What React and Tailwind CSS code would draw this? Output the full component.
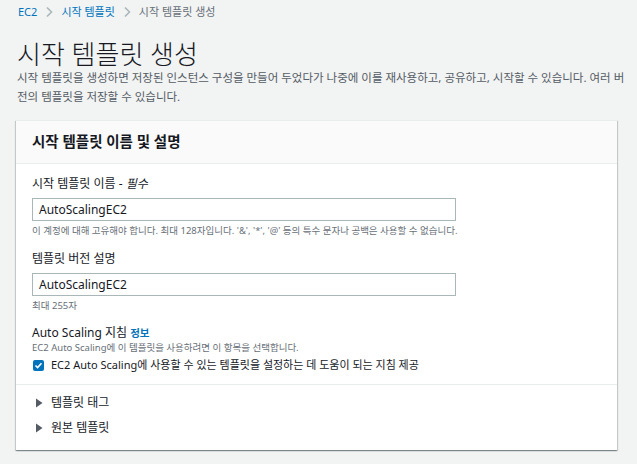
import React from 'react';

const FONT = { fontFamily: '"Noto Sans", "Noto Sans CJK KR", sans-serif' };

function Chevron() {
    return (
        <svg width="10" height="12" viewBox="0 0 10 12" className="mx-[7px]">
            <path d="M3 1.5 L7.5 6 L3 10.5" fill="none" stroke="#aab7b8" strokeWidth="1.6" />
        </svg>
    );
}

function Caret() {
    return (
        <svg width="8" height="10" viewBox="0 0 8 10" className="mr-[8px]">
            <path d="M1 0.5 L7.5 5 L1 9.5 Z" fill="#545b64" />
        </svg>
    );
}

function Field({ label, value, hint }) {
    return (
        <div className="flex flex-col">
            <label className="text-[12px] leading-[16px] text-[#16191f]">{label}</label>
            <div className="mt-[6px] w-[424px] h-[23px] border border-[#aab7b8] bg-white flex items-center px-[6px] text-[12px] text-[#16191f]">
                {value}
            </div>
            <p className="mt-[3px] text-[9.5px] leading-[14px] text-[#687078]">{hint}</p>
        </div>
    );
}

export default function App() {
    return (
        <div style={FONT} className="w-[637px] h-[464px] bg-[#f2f3f3] overflow-hidden">
            <nav className="flex items-center pl-[18px] pt-[4px] h-[20px] text-[11px] text-[#687078]">
                <span className="text-[#0073bb]">EC2</span>
                <Chevron />
                <span className="text-[#0073bb]">시작 템플릿</span>
                <Chevron />
                <span>시작 템플릿 생성</span>
            </nav>

            <div className="pl-[17px] pr-[12px] pt-[19px]">
                <h1 className="text-[26px] leading-[30px] font-light text-[#16191f]">시작 템플릿 생성</h1>
                <p className="mt-[-1px] text-[11.5px] leading-[19px] text-[#545b64]">
                    시작 템플릿을 생성하면 저장된 인스턴스 구성을 만들어 두었다가 나중에 이를 재사용하고, 공유하고, 시작할 수 있습니다. 여러 버전의 템플릿을 저장할 수 있습니다.
                </p>
            </div>

            <section className="ml-[16px] mt-[14px] w-[601px] bg-white border-t border-[#eaeded] shadow-[0_1px_1px_0_rgba(0,28,36,0.3),1px_1px_1px_0_rgba(0,28,36,0.15),-1px_1px_1px_0_rgba(0,28,36,0.15)]">
                <header className="h-[43px] bg-[#fafafa] border-b border-[#eaeded] flex items-center px-[16px]">
                    <h2 className="text-[14.5px] font-bold text-[#16191f]">시작 템플릿 이름 및 설명</h2>
                </header>

                <div className="px-[16px] pt-[12px] pb-[11px] flex flex-col gap-[13px]">
                    <Field
                        label={<>시작 템플릿 이름 - <i>필수</i></>}
                        value="AutoScalingEC2"
                        hint="이 계정에 대해 고유해야 합니다. 최대 128자입니다. '&', '*', '@' 등의 특수 문자나 공백은 사용할 수 없습니다."
                    />
                    <Field label="템플릿 버전 설명" value="AutoScalingEC2" hint="최대 255자" />

                    <div className="flex flex-col mt-[-1px]">
                        <div className="text-[12px] leading-[16px] text-[#16191f]">
                            Auto Scaling 지침 <span className="text-[10.5px] font-bold text-[#0073bb]">정보</span>
                        </div>
                        <p className="text-[9.5px] leading-[13px] text-[#687078]">EC2 Auto Scaling에 이 템플릿을 사용하려면 이 항목을 선택합니다.</p>
                        <label className="mt-[3px] flex items-center text-[11px] leading-[16px] text-[#16191f]">
                            <span className="w-[11px] h-[11px] rounded-[2px] bg-[#0073bb] flex items-center justify-center mr-[7px] ml-[1px]">
                                <svg width="9" height="9" viewBox="0 0 9 9">
                                    <path d="M1.5 4.5 L3.6 6.6 L7.5 2.2" fill="none" stroke="white" strokeWidth="1.6" />
                                </svg>
                            </span>
                            EC2 Auto Scaling에 사용할 수 있는 템플릿을 설정하는 데 도움이 되는 지침 제공
                        </label>
                    </div>
                </div>

                <div className="border-t border-[#eaeded] pt-[5px] pb-[10px] px-[19px] flex flex-col">
                    <div className="h-[25px] flex items-center text-[12px] text-[#16191f]">
                        <Caret />템플릿 태그
                    </div>
                    <div className="h-[25px] flex items-center text-[12px] text-[#16191f]">
                        <Caret />원본 템플릿
                    </div>
                </div>
            </section>
        </div>
    );
}
